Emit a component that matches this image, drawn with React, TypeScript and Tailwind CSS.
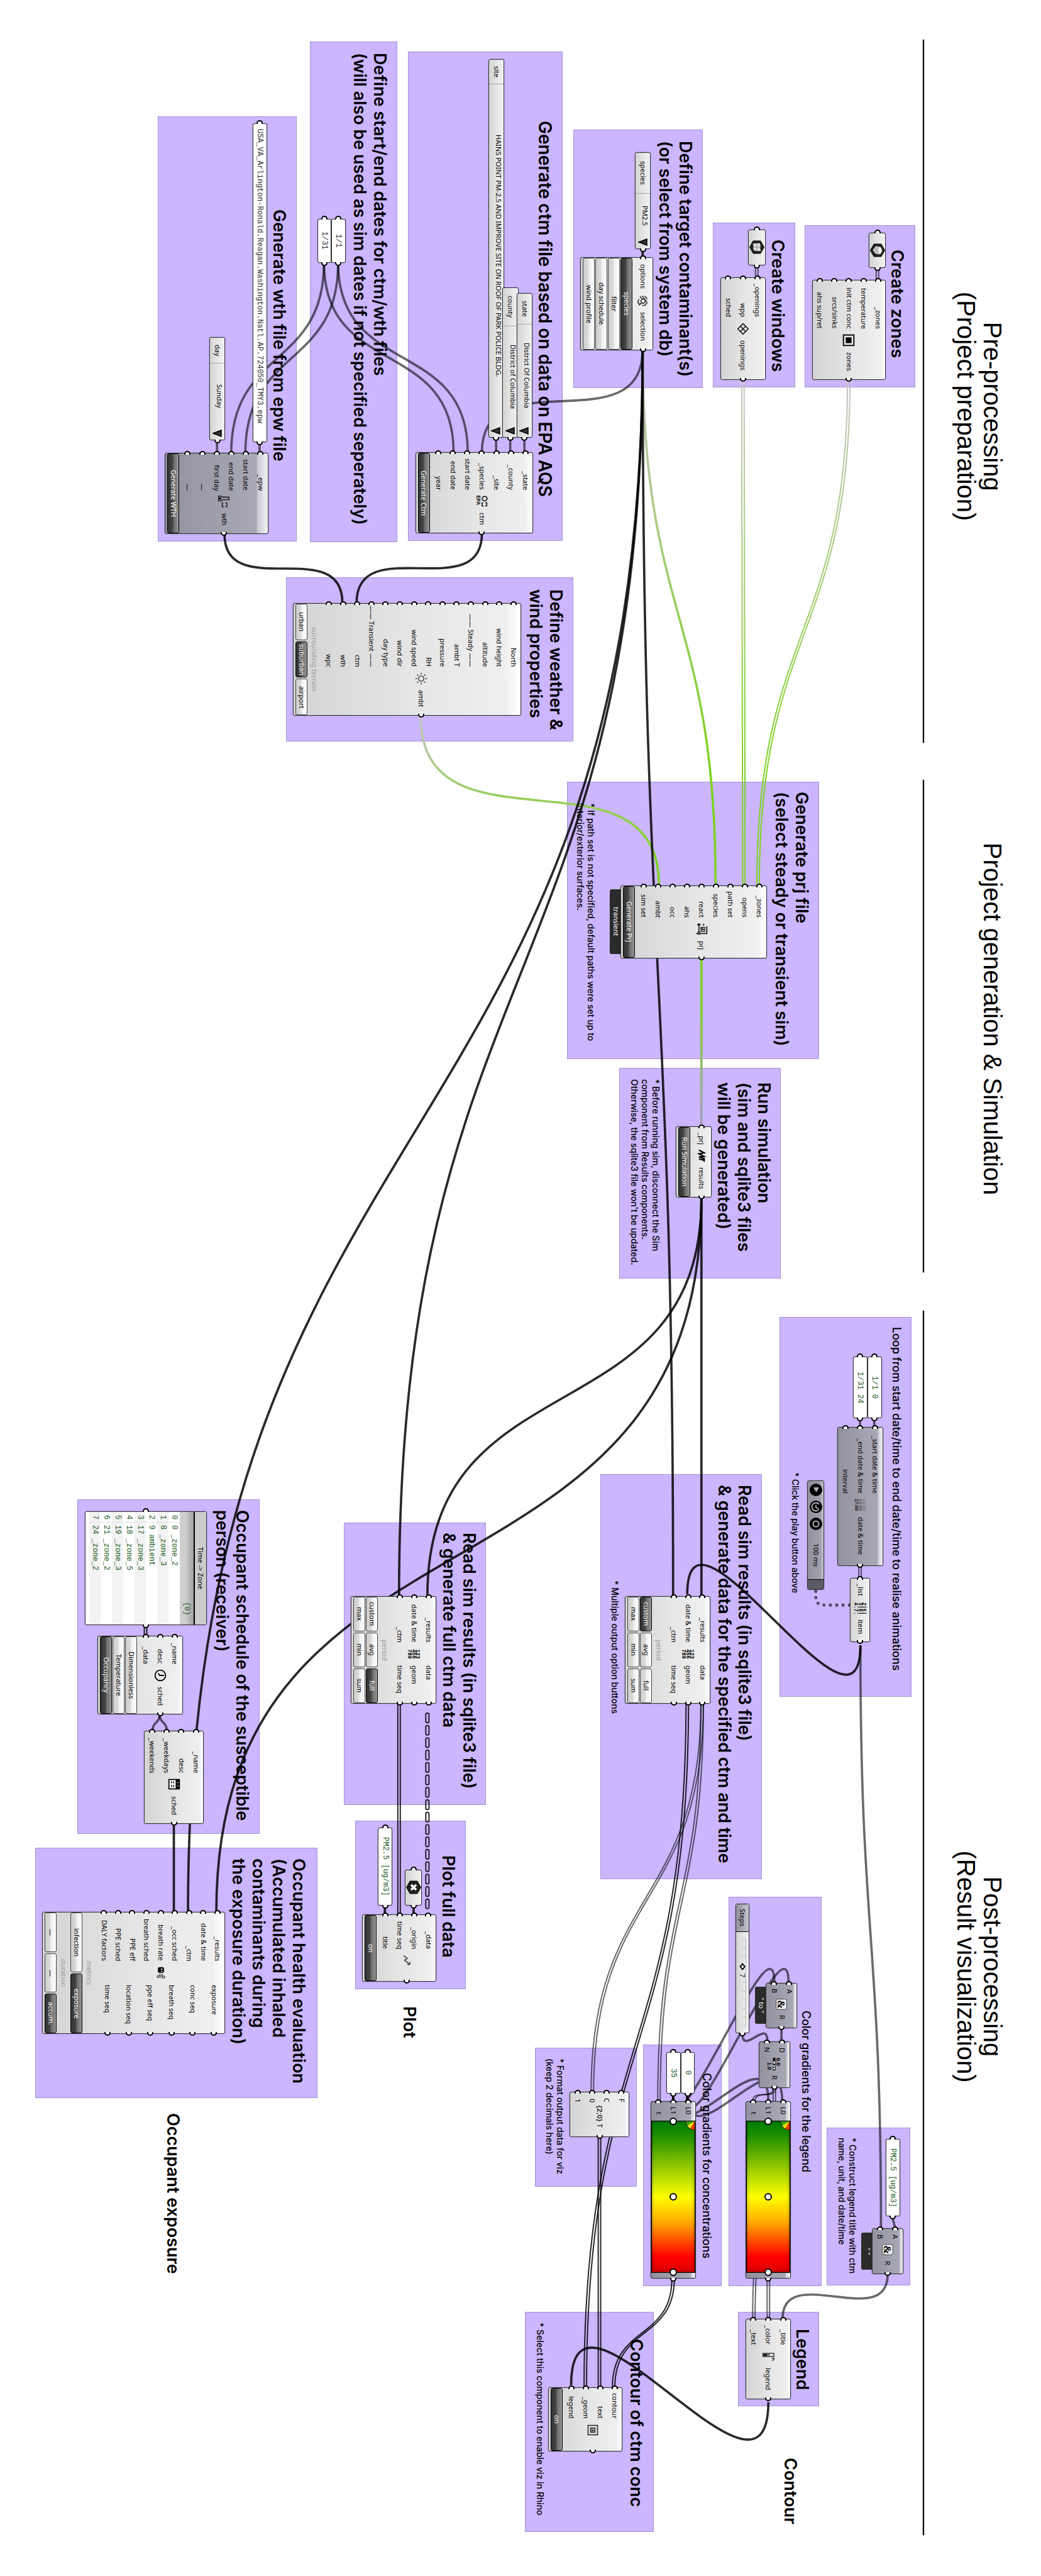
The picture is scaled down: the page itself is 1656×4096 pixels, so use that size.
import React from "react";

/* Board units: the diagram is laid out on a 2940 x 7270 board. */
const W = 2940;
const H = 7270;
const pct = (v: number, total: number) => `${(v / total) * 100}%`;
const place = (x: number, y: number, w: number, h: number): React.CSSProperties => ({
  left: pct(x, W),
  top: pct(y, H),
  width: pct(w, W),
  height: pct(h, H),
});

/* ------------------------------------------------------------------ icons */

type IconName =
  | "cube" | "surface" | "zone" | "window" | "find" | "epa" | "thermo" | "sun" | "prj" | "ant"
  | "times" | "digits" | "list" | "clock" | "calendar" | "breath" | "chart" | "point"
  | "concat" | "range" | "format" | "legend" | "contour";

const hexagon = (
  <path d="M12 0.5 22 6.2v11.6L12 23.5 2 17.8V6.2z" fill="#222" stroke="#000" strokeWidth="1" />
);

const drawings: Record<IconName, React.ReactNode> = {
  cube: (
    <>
      {hexagon}
      <path d="M7 8l6-3 5 3-1 7-5 4-6-4z" fill="#b9b9b9" stroke="#fff" strokeWidth="0.8" />
      <ellipse cx="12" cy="8" rx="5" ry="2.6" fill="#f0f0f0" />
    </>
  ),
  surface: (
    <>
      {hexagon}
      <path d="M6 8c4-3 7 1 12-2l-1 10c-4 3-7-1-10 2z" fill="#ddd" stroke="#fff" strokeWidth="0.8" />
      <path d="M12 7v10M6.5 12.500c4-2 7 1 11-1" stroke="#777" strokeWidth="0.8" fill="none" />
    </>
  ),
  zone: (
    <>
      <rect x="2" y="2" width="20" height="20" fill="none" stroke="#000" strokeWidth="2.2" />
      <rect x="6.5" y="6.5" width="11" height="11" fill="#000" />
    </>
  ),
  window: (
    <g fill="none" stroke="#111" strokeWidth="1.8">
      <path d="M12 2l10 10-10 10L2 12z" />
      <path d="M7 7l10 10M17 7L7 17" />
    </g>
  ),
  find: (
    <g fill="none" stroke="#333" strokeWidth="2">
      <path d="M3 9l6-5M3 14l11-9M4 18l5-4M15 4l6 4v6M9 20l6 2 5-4" />
      <circle cx="13" cy="12" r="4" />
      <path d="M16 15l5 5" />
    </g>
  ),
  epa: (
    <>
      <g fill="none" stroke="#111" strokeWidth="1.8">
        <path d="M7 1l4 2.500v5L7 11 3 8.500v-5z" />
        <path d="M15 5V2h6v3M21 8v3h-6V9" />
      </g>
      <text x="1" y="22" fontSize="10" fontWeight="700" fontFamily="Liberation Mono, monospace">EPA</text>
    </>
  ),
  thermo: (
    <g fill="none" stroke="#111" strokeWidth="1.6">
      <path d="M3 2h5v12l2 3v5H1v-5l2-3z" />
      <circle cx="5.500" cy="19" r="1.600" fill="#111" />
      <path d="M14 9V6h7v3M21 12v3h-7v-2" />
    </g>
  ),
  sun: (
    <g fill="none" stroke="#333" strokeWidth="1.7">
      <circle cx="12" cy="12" r="5" />
      <path d="M12 1v3M12 20v3M1 12h3M20 12h3M4.2 4.200l2.200 2.200M17.600 17.600l2.200 2.200M4.200 19.800l2.200-2.200M17.600 6.400l2.200-2.200" />
    </g>
  ),
  prj: (
    <g fill="none" stroke="#111" strokeWidth="2">
      <path d="M7 2h14v20" />
      <path d="M2 17h20M2 17l3-3M2 17l3 3M2 8h4M9 12h4" />
      <rect x="9" y="6" width="8" height="7" strokeWidth="1.5" />
      <circle cx="13" cy="9.500" r="1" />
      <circle cx="20" cy="17" r="2" fill="#fff" />
    </g>
  ),
  ant: (
    <path d="M1 17L6 7l2 10 5-10 1 10 3-10h6M20 7l-2 10" fill="none" stroke="#000" strokeWidth="2.600" />
  ),
  times: (
    <g fontSize="9" fontWeight="700" fontFamily="Liberation Sans, sans-serif">
      <text x="0" y="7" fill="#777">14:00</text>
      <text x="0" y="14" fill="#555">15:00</text>
      <text x="0" y="22" fill="#111">17:00</text>
    </g>
  ),
  digits: (
    <g fontSize="10" fontWeight="700" fontFamily="Liberation Mono, monospace">
      <text x="3" y="8">123</text>
      <text x="3" y="16">456</text>
      <text x="3" y="24">789</text>
    </g>
  ),
  list: (
    <g fontSize="10" fontWeight="700" fontFamily="Liberation Mono, monospace">
      <text x="2" y="7">2|5|</text>
      <text x="2" y="15">3|6|</text>
      <text x="2" y="23">4.7.</text>
    </g>
  ),
  clock: (
    <g fill="none" stroke="#000" strokeWidth="2.200">
      <circle cx="12" cy="12" r="10" />
      <path d="M12 5v8l-4 3" />
    </g>
  ),
  calendar: (
    <>
      <rect x="3" y="2" width="18" height="20" fill="#eee" stroke="#000" strokeWidth="2" />
      <rect x="3" y="2" width="18" height="7" fill="#000" />
      <path d="M8 5h2M14 5h2" stroke="#fff" strokeWidth="2" />
      <path d="M7 13h3M14 13h3M7 17h3M14 17h3" stroke="#111" strokeWidth="2" />
    </>
  ),
  breath: (
    <>
      <rect x="1" y="6" width="11" height="12" rx="4" fill="#111" />
      <path d="M4 9h2v3H4zM8 9h2v3H8z" fill="#ddd" />
      <path d="M14 9h6a2 2 0 1 0-2-2M14 12h8M14 15h5a2 2 0 1 1-2 2" fill="none" stroke="#333" strokeWidth="1.600" />
    </>
  ),
  chart: <path d="M3 18l5-7 4 5 8-10M20 6h-5M20 6v5" fill="none" stroke="#444" strokeWidth="2" />,
  point: (
    <>
      {hexagon}
      <path d="M8 8l8 8M16 8l-8 8" stroke="#fff" strokeWidth="3.500" />
    </>
  ),
  concat: (
    <>
      <rect x="2" y="2" width="20" height="20" rx="3" fill="#e9e9e9" stroke="#444" strokeWidth="1.200" />
      <text x="4" y="19" fontSize="20" fontWeight="700" fontFamily="Liberation Serif, serif">&amp;</text>
    </>
  ),
  range: (
    <>
      <text x="0" y="8" fontSize="11" fontWeight="700" fontFamily="Liberation Sans, sans-serif">0.0</text>
      <rect x="0" y="10" width="24" height="5" fill="#111" />
      <path d="M7 12.500h4M14 12.500h3M19 12.500h3" stroke="#fff" strokeWidth="3" />
      <text x="8" y="25" fontSize="11" fontWeight="700" fontFamily="Liberation Sans, sans-serif">1.0</text>
    </>
  ),
  format: (
    <text x="-3" y="17" fontSize="14" fontWeight="700" fill="#333" fontFamily="Liberation Sans, sans-serif">
      {"{2;0}"}
    </text>
  ),
  legend: (
    <>
      <rect x="6" y="1" width="6" height="21" fill="#eee" stroke="#111" strokeWidth="1.500" />
      <rect x="7" y="14" width="4" height="7" fill="#111" />
      <rect x="7" y="9" width="4" height="5" fill="#777" />
      <path d="M15 5V1h4M19 5V2" fill="none" stroke="#111" strokeWidth="1.500" />
    </>
  ),
  contour: (
    <g fill="none" stroke="#222">
      <rect x="3" y="3" width="18" height="18" strokeWidth="1.800" />
      <rect x="8" y="8" width="8" height="8" strokeWidth="2" />
      <rect x="11" y="11" width="2.500" height="2.500" fill="#222" />
    </g>
  ),
};

function Icon({ name, large }: { name: IconName; large?: boolean }) {
  return (
    <svg
      viewBox="0 0 24 24"
      aria-hidden="true"
      className={
        large
          ? "h-6 w-6 shrink-0 overflow-visible [writing-mode:horizontal-tb]"
          : "h-5 w-5 shrink-0 overflow-visible [writing-mode:horizontal-tb]"
      }
    >
      <g transform="rotate(90 12 12)">{drawings[name]}</g>
    </svg>
  );
}

/* ------------------------------------------------------------ node parts */

const light =
  "bg-[linear-gradient(270deg,#ffffff_0%,#efefef_7%,#e6e6e6_45%,#d4d4d4_100%)]";
const grey =
  "bg-[linear-gradient(270deg,#f4f4f6_0%,#cbcad4_10%,#a9a8b5_11%,#92919f_100%)]";
const shell =
  "absolute rounded-[3px] border border-[#333] shadow-[0_0_2px_rgba(0,0,0,0.35)] whitespace-nowrap";

function PortIn() {
  return (
    <span className="absolute -top-1.5 left-1/2 h-1.5 w-2.5 -translate-x-1/2 rounded-t-full border-2 border-b-0 border-black bg-white" />
  );
}

function PortOut() {
  return (
    <span className="absolute -bottom-1.5 left-1/2 h-1.5 w-2.5 -translate-x-1/2 rounded-b-full border-2 border-t-0 border-black bg-white" />
  );
}

type FooterItem = string | { label: string; dark?: boolean }[];

function Footer({ items }: { items: FooterItem[] }) {
  return (
    <div className="flex flex-col py-0.5 pl-0.5">
      {items.map((item, i) =>
        typeof item === "string" ? (
          <div key={i} className="flex w-[21px] items-center justify-center text-[11px] text-[#999]">
            {item}
          </div>
        ) : (
          <div key={i} className="flex w-5 gap-0.5">
            {item.map((b, j) => (
              <button
                key={j}
                type="button"
                className={
                  b.dark
                    ? "flex w-[19px] flex-1 basis-0 items-center justify-center rounded-[3px] border border-black bg-[linear-gradient(270deg,#969696_0%,#6a6a6a_45%,#454545_55%,#333333_100%)] text-[11px] text-white"
                    : "flex w-[19px] flex-1 basis-0 items-center justify-center rounded-[3px] border border-[#444] bg-[linear-gradient(270deg,#ffffff_0%,#f0f0f0_45%,#dcdcdc_55%,#cccccc_100%)] text-[11px] text-black"
                }
              >
                {b.label}
              </button>
            ))}
          </div>
        ),
      )}
    </div>
  );
}

interface NodeProps {
  x: number; y: number; w: number; h: number;
  ins: string[];
  outs: string[];
  inEnd: number;
  outStart: number;
  icon: IconName;
  footer?: FooterItem[];
  tone?: "light" | "grey";
  flap?: string;
}

function Component({ x, y, w, h, ins, outs, inEnd, outStart, icon, footer, tone, flap }: NodeProps) {
  return (
    <>
      {flap !== undefined && (
        <div
          className="absolute flex items-center justify-center whitespace-pre rounded-[3px] bg-[#2b2b2b] text-[11px] text-white"
          style={place(x - 31, y + 12, 34, h - 24)}
        >
          {flap}
        </div>
      )}
      <div className={`${shell} flex flex-col text-[11px] ${tone === "grey" ? grey : light}`} style={place(x, y, w, h)}>
        <div className="flex flex-1 px-0.5">
          <div className="flex shrink-0 flex-col" style={{ height: pct(inEnd - y, h) }}>
            {ins.map((label, i) => (
              <div key={i} className="relative flex flex-1 basis-0 items-center justify-end">
                <PortIn />
                {label}
              </div>
            ))}
          </div>
          <div
            className="flex shrink-0 items-center justify-center"
            style={{ height: pct(outStart - inEnd, h) }}
          >
            <Icon name={icon} />
          </div>
          <div className="flex flex-1 flex-col">
            {outs.map((label, i) => (
              <div key={i} className="relative flex flex-1 basis-0 items-center">
                <PortOut />
                {label}
              </div>
            ))}
          </div>
        </div>
        {footer && <Footer items={footer} />}
      </div>
    </>
  );
}

function ValueList({ x, y, w, h, split, label, value }: {
  x: number; y: number; w: number; h: number; split: number; label: string; value: string;
}) {
  return (
    <label className={`${shell} ${light} flex text-[11px]`} style={place(x, y, w, h)}>
      <PortOut />
      <span
        className="flex shrink-0 items-center justify-center border-b border-[#aaa]"
        style={{ height: pct(split - y, h) }}
      >
        {label}
      </span>
      <select
        defaultValue={value}
        className="min-h-0 w-full flex-1 appearance-none bg-transparent text-center text-[11px] text-black"
      >
        <option>{value}</option>
      </select>
      <svg viewBox="0 0 16 12" className="mb-1 h-3 w-4 shrink-0 self-center" aria-hidden="true">
        <path d="M1 6L14 1v10z" fill="#333" stroke="#000" strokeWidth="1.500" />
      </svg>
    </label>
  );
}

function Panel({ x, y, w, h, value, dark, center }: {
  x: number; y: number; w: number; h: number; value: string; dark?: boolean; center?: boolean;
}) {
  return (
    <div className={`${shell} flex bg-white`} style={place(x, y, w, h)}>
      <PortIn />
      <PortOut />
      <input
        aria-label="panel value"
        defaultValue={value}
        className={`min-h-0 w-full flex-1 bg-transparent font-['Liberation_Mono',monospace] text-xs ${
          dark ? "text-[#333]" : "text-[#1c5a1c]"
        } ${center ? "text-center" : "pt-2"}`}
      />
    </div>
  );
}

function Param({ x, y, w, h, icon }: { x: number; y: number; w: number; h: number; icon: IconName }) {
  return (
    <div className={`${shell} ${light} flex items-center justify-center`} style={place(x, y, w, h)}>
      <PortIn />
      <PortOut />
      <Icon name={icon} large />
    </div>
  );
}

function GradientNode({ x }: { x: number }) {
  return (
    <div className={`${shell} ${grey} flex text-[11px]`} style={place(x, 5932, 129, 500)}>
      <PortOut />
      <div className="flex h-[26px] shrink-0 flex-col px-0.5">
        {["L0", "L1", "t"].map((l) => (
          <div key={l} className="relative flex flex-1 basis-0 items-center justify-end pb-1">
            <PortIn />
            {l}
          </div>
        ))}
      </div>
      <div className="relative mx-1 mb-2 flex-1 border border-black bg-[linear-gradient(180deg,#007d00_0%,#178b00_8%,#ffff00_50%,#ffb000_66%,#ff3a00_82%,#ff0000_90%,#d80000_100%)] shadow-[inset_0_0_5px_rgba(0,0,0,0.45)]">
        <span className="absolute inset-y-0 left-1/2 w-1 -translate-x-1/2 border-x border-white/80" />
        <span className="absolute -top-1.5 left-1/2 h-3 w-3 -translate-x-1/2 rounded-full border-2 border-black bg-white" />
        <span className="absolute left-1/2 top-1/2 h-3 w-3 -translate-x-1/2 -translate-y-1/2 rounded-full border-2 border-black bg-white" />
        <span className="absolute -bottom-1.5 left-1/2 h-3 w-3 -translate-x-1/2 rounded-full border-2 border-black bg-white" />
        <svg viewBox="0 0 14 14" className="absolute right-0 top-0 h-3.5 w-3.5" aria-hidden="true">
          <path d="M14 0H0a14 14 0 0 0 2 7z" fill="#3aa000" />
          <path d="M14 0L2 7a14 14 0 0 0 5 5z" fill="#f2e200" />
          <path d="M14 0L7 12a14 14 0 0 0 7 2z" fill="#f03a00" />
          <path d="M0 0a14 14 0 0 0 14 14" fill="none" stroke="#222" />
        </svg>
      </div>
    </div>
  );
}

const schedule = [
  "0 _zone_2", "8 _zone_3", "9 ambient", "17 _zone_3",
  "18 _zone_5", "19 _zone_3", "21 _zone_2", "24 _zone_2",
];

function SchedulePanel() {
  return (
    <div
      className={`${shell} bg-white font-['Liberation_Mono',monospace] text-xs text-[#1c5a1c]`}
      style={place(239, 4267, 345, 320)}
    >
      <PortIn />
      <PortOut />
      <table className="h-full border-collapse">
        <caption className="w-5 border-l-2 border-black bg-[#cbcbcb] text-center font-['Noto_Sans',sans-serif] text-[11px] leading-[18px] text-black">
          Time -&gt; Zone
        </caption>
        <thead>
          <tr className="w-[22px] bg-[linear-gradient(270deg,#a2a2a2_0%,#cfcfcf_60%)]">
            <th colSpan={2} className="p-0 pb-3.5 text-right font-normal leading-[22px]">{"{0}"}</th>
          </tr>
        </thead>
        <tbody>
          {schedule.map((s, i) => (
            <tr key={i} className="leading-[18px] odd:bg-white even:bg-[#f3f3f3]">
              <td className="h-4 border-b border-[#ddd] p-0 text-center">{i}</td>
              <td className="p-0 pt-1 text-left">{s}</td>
            </tr>
          ))}
        </tbody>
      </table>
    </div>
  );
}

function StepsSlider() {
  return (
    <label className={`${shell} ${light} flex text-[11px]`} style={place(2077, 5374, 40, 366)}>
      <PortOut />
      <span className="flex h-11 shrink-0 items-center justify-center border-b border-black bg-[linear-gradient(270deg,#c4c3cf,#92919f)]">
        Steps
      </span>
      <span className="relative flex-1">
        <svg viewBox="0 0 40 288" preserveAspectRatio="none" className="h-full w-full" aria-hidden="true">
          <path
            d="M30 20V268M20 20h10M20 45h10M20 70h10M20 144h10M20 169h10M20 194h10M20 219h10M20 243h10M20 268h10"
            stroke="#aaa"
            fill="none"
            strokeWidth="1.500"
          />
          <path d="M20 91l7 8-7 8-7-8z" fill="#fff" stroke="#000" strokeWidth="3.500" />
        </svg>
        <output className="absolute left-1/2 top-[66px] -translate-x-1/2">7</output>
        <input
          type="range"
          min={0}
          max={20}
          defaultValue={7}
          className="absolute inset-0 h-full w-full opacity-0"
        />
      </span>
    </label>
  );
}

function Timer() {
  return (
    <div className={`${shell} flex items-center bg-[linear-gradient(270deg,#c9c8d2,#a09fac_20%,#92919f)] text-[11px]`} style={place(2280, 4179, 48, 310)}>
      <div className="flex items-center gap-[7px] pt-1">
        <button type="button" aria-label="play" className="h-5 w-5 rounded-full bg-black">
          <svg viewBox="0 0 20 20"><path d="M6 6h9l-4.500 8z" fill="#b5b4c0" /></svg>
        </button>
        <button type="button" aria-label="interval" className="h-5 w-5 rounded-full bg-black">
          <svg viewBox="0 0 20 20" fill="none" stroke="#b5b4c0" strokeWidth="1.800">
            <path d="M15 6a6.500 6.500 0 1 0 0 8M10 7v4l4 2" />
          </svg>
        </button>
        <button type="button" aria-label="target" className="h-5 w-5 rounded-full bg-black">
          <svg viewBox="0 0 20 20" fill="none" stroke="#b5b4c0" strokeWidth="2">
            <circle cx="10" cy="10" r="4.500" />
          </svg>
        </button>
      </div>
      <span className="flex flex-1 justify-center">100 ms</span>
      <span className="h-4 w-full border-t border-black bg-[#5c5b64]" />
    </div>
  );
}

/* ----------------------------------------------------------------- wires */

type WireTone = "black" | "grey" | "toGreen" | "fromGreen";

function Wire({ a, b, tone = "black", double, reach }: {
  a: [number, number]; b: [number, number]; tone?: WireTone; double?: boolean; reach?: number;
}) {
  const [x1, y1] = a;
  const [x2, y2] = b;
  const d = reach ?? Math.hypot(x2 - x1, y2 - y1) / 2;
  const id = `wire-${x1}-${x2}-${y2}`;
  const gradient = tone === "toGreen" || tone === "fromGreen";
  const stroke = gradient ? `url(#${id})` : "#000";
  const opacity = gradient ? 1 : tone === "black" ? 0.84 : 0.58;
  const offsets = double ? [-3.5, 3.5] : [0];
  return (
    <g fill="none" stroke={stroke} strokeOpacity={opacity} strokeWidth={double ? 3.6 : 6.5}>
      {gradient && (
        <linearGradient id={id} gradientUnits="userSpaceOnUse" x1={0} x2={0} y1={y1} y2={y2}>
          <stop offset="0" stopColor={tone === "toGreen" ? "#c6c6c4" : "#7ed321"} />
          <stop offset={tone === "toGreen" ? 0.8 : 0.3} stopColor="#7ed321" />
          <stop offset="1" stopColor={tone === "toGreen" ? "#7ed321" : "#a59bc0"} />
        </linearGradient>
      )}
      {offsets.map((o) => (
        <path key={o} d={`M${x1 + o} ${y1}C${x1 + o} ${y1 + d} ${x2 + o} ${y2 - d} ${x2 + o} ${y2}`} />
      ))}
    </g>
  );
}

const pills = Array.from({ length: 16 }, (_, i) => 4836 + i * 35);

function Wires() {
  return (
    <svg viewBox={`0 0 ${W} ${H}`} className="relative z-10 block w-full" aria-hidden="true">
      <g stroke="#000" strokeWidth="4">
        <path d="M2608 112V2097M2608 2201V3592M2608 3700V7157" />
      </g>
      <Wire a={[2478, 756]} b={[2478, 790]} tone="grey" double />
      <Wire a={[2137, 749]} b={[2137, 783]} tone="grey" double />
      <Wire a={[1815, 703]} b={[1815, 727]} />
      <Wire a={[2397, 1073]} b={[2141, 2499]} tone="toGreen" double />
      <Wire a={[2098, 1073]} b={[2101, 2499]} tone="toGreen" double />
      <Wire a={[1815, 988]} b={[2021, 2499]} tone="toGreen" />
      <Wire a={[1188, 2021]} b={[1861, 2499]} tone="toGreen" />
      <Wire a={[1981, 2705]} b={[1981, 3179]} tone="fromGreen" />
      <Wire a={[1815, 988]} b={[1901, 4506]} />
      <Wire a={[1815, 988]} b={[1127, 4506]} />
      <Wire a={[1815, 988]} b={[531, 5397]} />
      <Wire a={[1815, 988]} b={[1361, 1277]} tone="grey" />
      <Wire a={[955, 742]} b={[1321, 1277]} tone="grey" />
      <Wire a={[915, 742]} b={[1281, 1277]} tone="grey" />
      <Wire a={[955, 742]} b={[693, 1279]} tone="grey" />
      <Wire a={[915, 742]} b={[653, 1279]} tone="grey" />
      <Wire a={[1481, 1235]} b={[1481, 1277]} tone="grey" />
      <Wire a={[1441, 1235]} b={[1441, 1277]} tone="grey" />
      <Wire a={[1401, 1235]} b={[1401, 1277]} tone="grey" />
      <Wire a={[733, 1248]} b={[733, 1279]} tone="grey" />
      <Wire a={[613, 1243]} b={[613, 1279]} tone="grey" />
      <Wire a={[1361, 1506]} b={[1007, 1702]} />
      <Wire a={[634, 1508]} b={[967, 1702]} />
      <Wire a={[1981, 3381]} b={[1981, 4506]} />
      <Wire a={[1981, 3381]} b={[1207, 4506]} />
      <Wire a={[1981, 3381]} b={[611, 5397]} />
      <Wire a={[2469, 4004]} b={[2469, 4028]} tone="grey" />
      <Wire a={[2429, 4004]} b={[2429, 4028]} tone="grey" />
      <Wire a={[2429, 4420]} b={[2429, 4455]} tone="grey" double />
      <Wire a={[2430, 4645]} b={[1941, 4500]} reach={335} />
      <Wire a={[2430, 4645]} b={[2488, 6290]} tone="grey" />
      <path
        d="M2304 4492V4512Q2304 4531 2330 4531H2401"
        fill="none" stroke="#000" strokeOpacity="0.58" strokeWidth="9" strokeLinecap="round" strokeDasharray="0.1 17.800"
      />
      <Wire a={[1983, 4809]} b={[1673, 5904]} tone="grey" double />
      <Wire a={[1983, 4809]} b={[1861, 5932]} tone="grey" double />
      <Wire a={[1941, 4809]} b={[1653, 6739]} double />
      <Wire a={[1127, 4809]} b={[1127, 5404]} double />
      <g fill="none" stroke="#000" strokeOpacity="0.84" strokeWidth="3.500">
        {pills.map((y) => (
          <rect key={y} x="1202.500" y={y} width="9" height="27" rx="4" />
        ))}
      </g>
      <Wire a={[1087, 5379]} b={[1087, 5404]} />
      <Wire a={[1168, 5379]} b={[1168, 5404]} />
      <Wire a={[1693, 6032]} b={[1693, 6739]} double />
      <Wire a={[1901, 6432]} b={[1733, 6739]} double />
      <Wire a={[2170, 6432]} b={[2170, 6546]} tone="grey" double />
      <Wire a={[2187, 5894]} b={[2129, 5932]} tone="grey" double />
      <Wire a={[2187, 5894]} b={[2129, 6546]} tone="grey" double />
      <Wire a={[1941, 5910]} b={[2209, 5932]} tone="grey" reach={210} />
      <Wire a={[1901, 5910]} b={[2170, 5932]} tone="grey" reach={210} />
      <Wire a={[1941, 5910]} b={[2227, 5597]} tone="grey" />
      <Wire a={[1901, 5910]} b={[2187, 5597]} tone="grey" />
      <Wire a={[1941, 5910]} b={[1941, 5932]} />
      <Wire a={[1901, 5910]} b={[1901, 5932]} />
      <Wire a={[2207, 5726]} b={[2207, 5762]} tone="grey" />
      <Wire a={[2097, 5742]} b={[2167, 5760]} tone="grey" reach={60} />
      <Wire a={[2521, 6257]} b={[2527, 6290]} tone="grey" />
      <Wire a={[2507, 6420]} b={[2210, 6546]} tone="grey" />
      <Wire a={[2170, 6781]} b={[1613, 6733]} reach={385} />
      <Wire a={[451, 4840]} b={[471, 4885]} tone="grey" />
      <Wire a={[451, 4840]} b={[431, 4885]} tone="grey" />
      <Wire a={[411, 4587]} b={[411, 4618]} double />
      <Wire a={[491, 5148]} b={[491, 5397]} />
    </svg>
  );
}

/* --------------------------------------------------------- groups & text */

const groups: [number, number, number, number][] = [
  [2273, 636, 312, 457],
  [2013, 628, 232, 465],
  [1619, 366, 366, 730],
  [1153, 146, 436, 1381],
  [875, 118, 247, 1412],
  [445, 329, 393, 1200],
  [807, 1630, 812, 464],
  [1601, 2206, 713, 784],
  [1748, 3015, 457, 594],
  [2201, 3718, 373, 1072],
  [1695, 4161, 457, 1144],
  [972, 4298, 401, 798],
  [1003, 5140, 313, 475],
  [219, 4232, 515, 945],
  [99, 5216, 798, 706],
  [2334, 6006, 237, 446],
  [2057, 5354, 263, 1099],
  [1817, 5772, 221, 681],
  [1510, 5781, 288, 392],
  [2085, 6526, 229, 267],
  [1482, 6527, 364, 621],
];

type TextSize = "big" | "title" | "sub" | "note";
/* centre of the first line, start of the text, size, lines */
const texts: [number, number, TextSize, string[]][] = [
  [2534, 705, "title", ["Create zones"]],
  [2196, 676, "title", ["Create windows"]],
  [1935, 397, "title", ["Define target contaminant(s)", "(or select from system db)"]],
  [1540, 341, "big", ["Generate ctm file based on data on EPA AQS"]],
  [1072, 150, "title", ["Define start/end dates for ctm/wth files", "(will also be used as sim dates if not specified seperately)"]],
  [788, 591, "title", ["Generate wth file from epw file"]],
  [1569, 1664, "title", ["Define weather &", "wind properties"]],
  [2264, 2236, "title", ["Generate prj file", "(select steady or transient sim)"]],
  [2157, 3055, "title", ["Run simulation", "(sim and sqlite3 files", "will be generated)"]],
  [2102, 4191, "title", ["Read sim results (in sqlite3 file)", "& generate data for the specified ctm and time"]],
  [1325, 4327, "title", ["Read sim results (in sqlite3 file)", "& generate full ctm data"]],
  [1266, 5238, "title", ["Plot full data"]],
  [1155, 5664, "title", ["Plot"]],
  [684, 4263, "title", ["Occupant schedule of the susceptible", "person (receiver)"]],
  [843, 5247, "title", ["Occupant health evaluation", "(Accumulated inhaled", "contaminants during", "the exposure duration)"]],
  [488, 5965, "title", ["Occupant exposure"]],
  [2265, 6574, "title", ["Legend"]],
  [2231, 6939, "title", ["Contour"]],
  [1797, 6603, "title", ["Contour of ctm conc"]],
  [2531, 3746, "sub", ["Loop from start date/time to end date/time to realise animations"]],
  [2276, 5676, "sub", ["Color gradients for the legend"]],
  [1995, 5852, "sub", ["Color gradients for concentrations"]],
  [1669, 2267, "note", ["* If path set is not specified, default paths were set up to", "interior/exterior surfaces."]],
  [1852, 3046, "note", ["* Before running sim, disconnect the Sim", "component from Results components.", "Otherwise, the sqlite3 file won't be updated."]],
  [2246, 4156, "note", ["* Click the play button above"]],
  [1737, 4462, "note", ["* Multiple output option buttons"]],
  [1583, 5811, "note", ["* Format output data for viz", "(keep 2 decimals here)"]],
  [2408, 6034, "note", ["* Construct legend title with ctm", "name, unit, and date/time"]],
  [1526, 6557, "note", ["* Select this component to enable viz in Rhino"]],
];

const textClass: Record<TextSize, string> = {
  big: "text-[28px] leading-8 font-semibold",
  title: "text-[27px] leading-8 font-semibold",
  sub: "text-[18px] leading-6 font-medium",
  note: "text-[14px] leading-[17px] font-medium",
};
const halfLine: Record<TextSize, number> = { big: 28.4, title: 28.4, sub: 21.3, note: 15.1 };

const headings: { at: number; lines: string[] }[] = [
  { at: 1147, lines: ["Pre-processing", "(Project preparation)"] },
  { at: 2876, lines: ["Project generation & Simulation"] },
  { at: 5551, lines: ["Post-processing", "(Result visualization)"] },
];

export default function App() {
  return (
    <main className="relative w-full bg-white text-black">
      <div className="absolute inset-0 [writing-mode:vertical-rl] [text-orientation:sideways]">
        {groups.map(([x, y, w, h]) => (
          <section
            key={`${x}-${y}`}
            className="absolute border border-[#a594d3] bg-[#cbb6ff]"
            style={place(x, y, w, h)}
          />
        ))}
        {texts.map(([cx, y, size, lines]) => (
          <p
            key={`${cx}-${y}`}
            className={`absolute whitespace-nowrap font-['Inter',sans-serif] ${textClass[size]}`}
            style={{ right: pct(W - cx - halfLine[size], W), top: pct(y, H) }}
          >
            {lines.map((l) => (
              <span key={l} className="block">{l}</span>
            ))}
          </p>
        ))}
        {headings.map(({ at, lines }) => (
          <h2
            key={at}
            className="absolute -translate-y-1/2 whitespace-nowrap text-center font-['Liberation_Sans',sans-serif] text-[40px] leading-[42px]"
            style={{ right: pct(100, W), top: pct(at, H) }}
          >
            {lines.map((l) => (
              <span key={l} className="block">{l}</span>
            ))}
          </h2>
        ))}
      </div>

      <Wires />

      <div className="absolute inset-0 z-20 font-['Noto_Sans',sans-serif] [writing-mode:vertical-rl] [text-orientation:sideways]">
        <Param x={2454} y={656} w={48} h={100} icon="cube" />
        <Component x={2293} y={790} w={209} h={283} inEnd={928} outStart={996} icon="zone"
          ins={["_zones", "temperature", "init ctm conc", "srcs/sinks", "ahs sup/ret"]} outs={["zones"]} />
        <Param x={2113} y={648} w={49} h={101} icon="surface" />
        <Component x={2034} y={783} w={128} h={290} inEnd={894} outStart={962} icon="window"
          ins={["_openings", "wpp", "sched"]} outs={["openings"]} />

        <ValueList x={1793} y={430} w={45} h={273} split={546} label="species" value="PM2.5" />
        <Component x={1639} y={727} w={205} h={262} inEnd={813} outStart={882} icon="find"
          ins={["options"]} outs={["selection"]}
          footer={[[{ label: "species", dark: true }], [{ label: "filter" }], [{ label: "day schedule" }], [{ label: "wind profile" }]]} />

        <ValueList x={1379} y={166} w={45} h={1069} split={237} label="site"
          value="HAINS POINT PM-2.5 AND IMPROVE SITE ON ROOF OF PARK POLICE BLDG." />
        <ValueList x={1419} y={811} w={45} h={424} split={920} label="county" value="District of Columbia" />
        <ValueList x={1459} y={828} w={45} h={407} split={915} label="state" value="District Of Columbia" />
        <Component x={1173} y={1277} w={333} h={229} inEnd={1383} outStart={1450} icon="epa"
          ins={["_state", "_county", "_site", "_species", "start date", "end date", "year"]} outs={["ctm"]}
          footer={[[{ label: "Generate Ctm", dark: true }]]} />

        <Panel x={936} y={617} w={40} h={125} value="1/1" dark center />
        <Panel x={896} y={617} w={40} h={125} value="1/31" dark center />
        <Panel x={713} y={348} w={41} h={900} dark
          value="USA_VA_Arlington-Ronald.Reagan.Washington.Natl.AP.724050_TMY3.epw" />
        <ValueList x={591} y={952} w={45} h={291} split={1025} label="day" value="Sunday" />
        <Component x={465} y={1279} w={293} h={229} inEnd={1385} outStart={1452} icon="thermo" tone="grey"
          ins={["_epw", "start date", "end date", "first day", "—", "—"]} outs={["wth"]}
          footer={[[{ label: "Generate WTH", dark: true }]]} />

        <Component x={827} y={1702} w={645} h={319} inEnd={1883} outStart={1951} icon="sun"
          ins={["North", "wind height", "altitude", "—— Steady ——", "ambt T", "pressure", "RH", "wind speed", "wind dir", "day type", "—— Transient ——", "ctm", "wth", "wpc"]}
          outs={["ambt"]}
          footer={["surrounding terrain", [{ label: "urban" }, { label: "suburban", dark: true }, { label: "airport" }]]} />

        <Component x={1753} y={2499} w={413} h={206} inEnd={2590} outStart={2658} icon="prj" flap="transient"
          ins={["_zones", "opens", "path set", "species", "react", "ahs", "occ", "ambt", "sim set"]} outs={["prj"]}
          footer={[[{ label: "Generate Prj", dark: true }]]} />
        <Component x={1909} y={3179} w={101} h={202} inEnd={3228} outStart={3296} icon="ant"
          ins={["_prj"]} outs={["results"]} footer={[[{ label: "Run Simulation", dark: true }]]} />

        <Panel x={2450} y={3829} w={40} h={175} value="1/1 0" center />
        <Panel x={2409} y={3829} w={41} h={175} value="1/31 24" center />
        <Component x={2365} y={4028} w={129} h={392} inEnd={4216} outStart={4283} icon="times" tone="grey"
          ins={["_start date & time", "_end date & time", "interval"]} outs={["date & time"]} />
        <Timer />
        <Component x={2401} y={4455} w={57} h={181} inEnd={4503} outStart={4573} icon="list"
          ins={["_list"]} outs={["item"]} />

        <Component x={1765} y={4506} w={241} h={303} inEnd={4635} outStart={4703} icon="digits"
          ins={["_results", "date & time", "_ctm"]} outs={["data", "geom", "time seq"]}
          footer={["period", [{ label: "custom", dark: true }, { label: "avg" }, { label: "full" }], [{ label: "max" }, { label: "min" }, { label: "sum" }]]} />
        <Component x={991} y={4506} w={242} h={303} inEnd={4635} outStart={4703} icon="digits"
          ins={["_results", "date & time", "_ctm"]} outs={["data", "geom", "time seq"]}
          footer={["period", [{ label: "custom" }, { label: "avg" }, { label: "full", dark: true }], [{ label: "max" }, { label: "min" }, { label: "sum" }]]} />

        <Panel x={1067} y={5160} w={41} h={219} value="PM2.5 [ug/m3]" center />
        <Param x={1143} y={5278} w={49} h={101} icon="point" />
        <Component x={1023} y={5404} w={209} h={191} inEnd={5502} outStart={5570} icon="chart"
          ins={["_data", "_origin", "time seq", "title"]} outs={[""]} footer={[[{ label: "on", dark: true }]]} />

        <SchedulePanel />
        <Component x={275} y={4618} w={241} h={222} inEnd={4696} outStart={4764} icon="clock"
          ins={["_name", "desc", "_data"]} outs={["sched"]}
          footer={[[{ label: "Dimensionless" }], [{ label: "Temperature" }], [{ label: "Occupancy", dark: true }]]} />
        <Component x={407} y={4885} w={169} h={263} inEnd={5005} outStart={5072} icon="calendar"
          ins={["_name", "desc", "_weekdays", "_weekends"]} outs={["sched"]} />

        <Component x={119} y={5397} w={517} h={345} inEnd={5535} outStart={5604} icon="breath"
          ins={["_results", "date & time", "_ctm", "_occ sched", "breath rate", "breath sched", "PPE eff", "PPE sched", "DALY factors"]}
          outs={["exposure", "conc seq", "breath seq", "ppe eff seq", "location seq", "time seq"]}
          footer={["metrics", [{ label: "infection" }, { label: "exposure", dark: true }], "duration", [{ label: "—" }, { label: "—" }, { label: "accum.", dark: true }]]} />

        <StepsSlider />
        <Component x={2163} y={5597} w={89} h={129} inEnd={5624} outStart={5691} icon="concat" tone="grey" flap={'" to "'}
          ins={["A", "B"]} outs={["R"]} />
        <Component x={2143} y={5762} w={89} h={132} inEnd={5791} outStart={5861} icon="range" tone="grey"
          ins={["D", "N"]} outs={["R"]} />
        <GradientNode x={2105} />
        <Panel x={1922} y={5793} w={40} h={117} value="0" center />
        <Panel x={1881} y={5793} w={41} h={117} value="35" center />
        <GradientNode x={1837} />
        <Component x={1609} y={5904} w={168} h={128} inEnd={5932} outStart={5998} icon="format"
          ins={["F", "C", "0", "1"]} outs={["T"]} />

        <Panel x={2501} y={6038} w={41} h={219} value="PM2.5 [ug/m3]" center />
        <Component x={2463} y={6290} w={88} h={130} inEnd={6317} outStart={6385} icon="concat" tone="grey" flap={'" "'}
          ins={["A", "B"]} outs={["R"]} />
        <Component x={2105} y={6546} w={129} h={227} inEnd={6617} outStart={6686} icon="legend"
          ins={["_title", "_color", "_text"]} outs={["legend"]} />
        <Component x={1549} y={6739} w={209} h={181} inEnd={6828} outStart={6896} icon="contour"
          ins={["contour", "text", "_geom", "legend"]} outs={[""]} footer={[[{ label: "on", dark: true }]]} />
      </div>
    </main>
  );
}
